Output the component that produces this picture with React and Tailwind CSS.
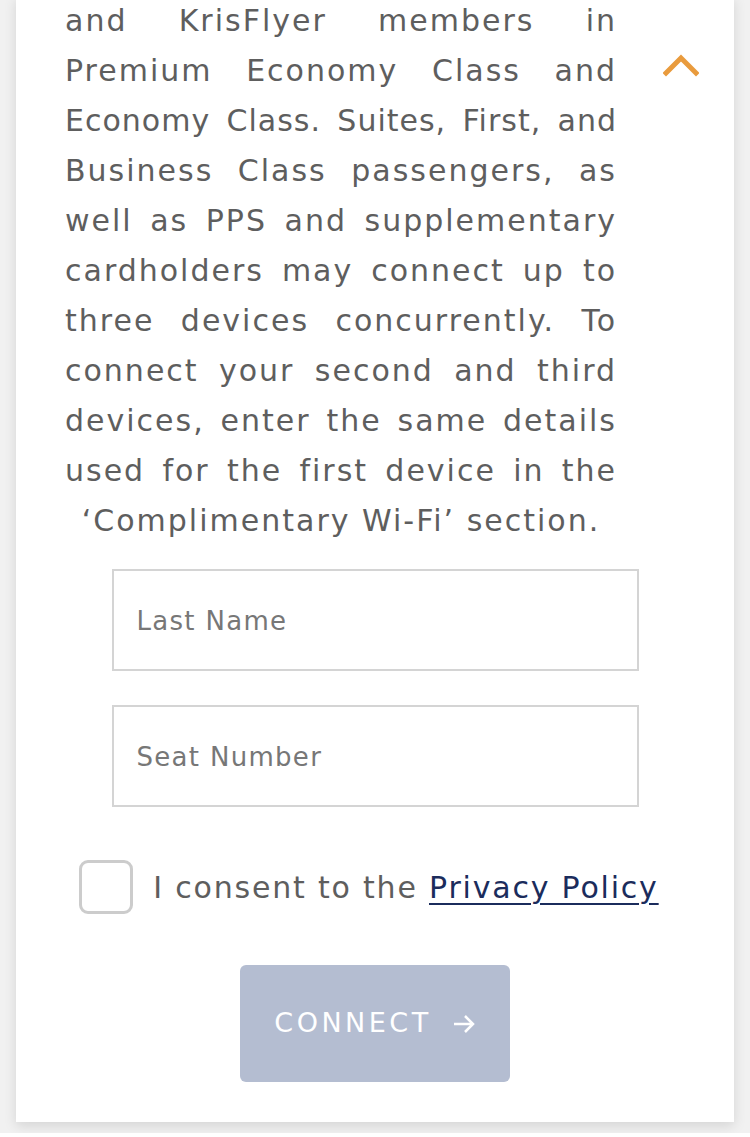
import React from "react";

const lines = [
  ["and KrisFlyer members in", "tracking-[2px]"],
  ["Premium Economy Class and", "tracking-[2px]"],
  ["Economy Class. Suites, First, and", "tracking-[1px]"],
  ["Business Class passengers, as", "tracking-[2px]"],
  ["well as PPS and supplementary", "tracking-[2px]"],
  ["cardholders may connect up to", "tracking-[2px]"],
  ["three devices concurrently. To", "tracking-[2px]"],
  ["connect your second and third", "tracking-[2px]"],
  ["devices, enter the same details", "tracking-[2px]"],
  ["used for the first device in the", "tracking-[2px]"],
];

export default function App() {
  const font = { fontFamily: '"DejaVu Sans", "Noto Sans", sans-serif' };
  return (
    <div className="min-h-[1137px] bg-[#f1f1f1] px-[16px]" style={font}>
      <div className="bg-white shadow-[0_4px_12px_rgba(0,0,0,0.12)] pb-[40px] -mt-[4px]">
        <div className="flex pl-[49px]">
          <div className="w-[552px] text-[30px] leading-[50px] text-[#5e5e5e]">
            {lines.map(([l, t], i) => (
              <div key={i} className={"whitespace-nowrap text-justify [text-align-last:justify] " + t}>{l}</div>
            ))}
            <div className="text-center tracking-[2px]">‘Complimentary Wi-Fi’ section.</div>
          </div>
          <div className="ml-[46px] pt-[57px]">
            <svg width="36" height="24" viewBox="0 0 36 24">
              <path d="M3 20 L18 5 L33 20" fill="none" stroke="#e99b3d" strokeWidth="5" strokeLinecap="square" />
            </svg>
          </div>
        </div>
        <div className="flex flex-col items-center mt-[23px]">
          <div className="w-[527px] h-[102px] border-2 border-[#d4d4d4] flex items-center pl-[23px] pt-[2px] text-[26px] text-[#777777] tracking-[1.3px]">Last Name</div>
          <div className="w-[527px] h-[102px] border-2 border-[#d4d4d4] flex items-center pl-[23px] pt-[2px] text-[26px] text-[#777777] mt-[34px] tracking-[1.3px]">Seat Number</div>
          <div className="flex items-center mt-[53px] ml-[-12px]">
            <div className="w-[54px] h-[54px] rounded-[9px] border-[3px] border-[#cccccc]" />
            <div className="ml-[20px] text-[30px] text-[#5e5e5e] tracking-[1.8px]">
              I consent to the{" "}
              <span className="text-[#1b2c5c] underline underline-offset-[5px] decoration-2">Privacy Policy</span>
            </div>
          </div>
          <div className="mt-[51px] w-[270px] h-[117px] rounded-[6px] bg-[#b4bdd1] flex items-center justify-center text-white text-[27px] tracking-[3.5px]">
            <span>CONNECT</span>
            <svg className="ml-[20px]" width="24" height="22" viewBox="0 0 24 22">
              <path d="M2 11 H21 M13 3 L21 11 L13 19" fill="none" stroke="white" strokeWidth="2.5" />
            </svg>
          </div>
        </div>
      </div>
    </div>
  );
}
